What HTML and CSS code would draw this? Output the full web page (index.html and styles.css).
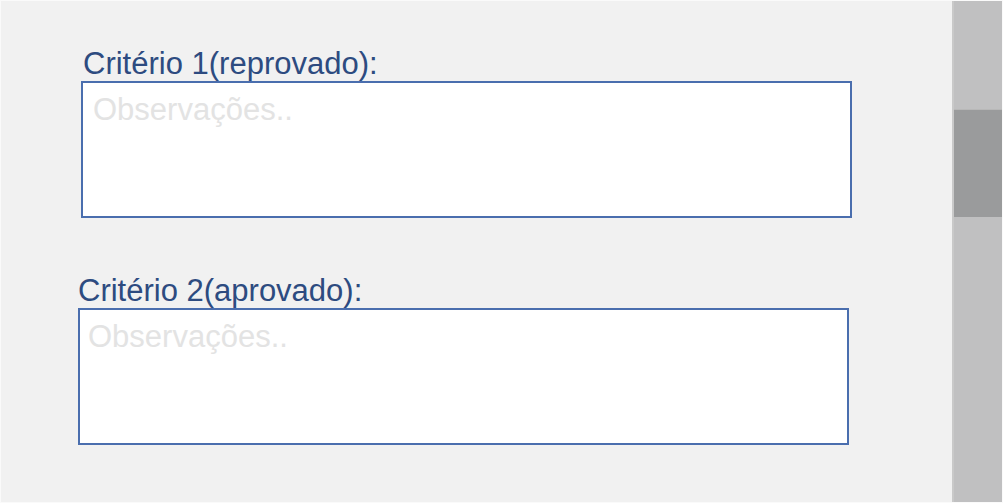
FILE: index.html
```html
<!DOCTYPE html>
<html lang="pt">
<head>
<meta charset="utf-8">
<link rel="stylesheet" href="styles.css">
</head>
<body>
<div class="frame">
  <div class="content">
    <div class="field field-1">
      <label class="label">Critério 1(reprovado):</label>
      <textarea class="obs" placeholder="Observações.."></textarea>
    </div>
    <div class="field field-2">
      <label class="label">Critério 2(aprovado):</label>
      <textarea class="obs" placeholder="Observações.."></textarea>
    </div>
  </div>
  <div class="scrollbar">
    <div class="track-top"></div>
    <div class="thumb"></div>
    <div class="track-bottom"></div>
  </div>
</div>
</body>
</html>
```
FILE: styles.css
```css
html, body {
  margin: 0;
  padding: 0;
  background: #ffffff;
}
.frame {
  box-sizing: border-box;
  width: 1003px;
  height: 503px;
  border: 1px solid #fafafa;
  background: #f1f1f1;
  display: flex;
  overflow: hidden;
}
.content {
  flex: 1;
  display: flex;
  flex-direction: column;
}
.field {
  display: flex;
  flex-direction: column;
  align-items: flex-start;
}
.field-1 {
  margin-top: 45px;
  margin-left: 80px;
}
.field-1 .label {
  padding-left: 2px;
}
.field-2 {
  margin-top: 55px;
  margin-left: 77px;
}
.field-2 .obs {
  padding-left: 8px;
}
.label {
  font-family: "Liberation Sans", Arial, sans-serif;
  font-size: 31px;
  line-height: 35px;
  color: #2d4b80;
}
.obs {
  box-sizing: border-box;
  width: 771px;
  height: 137px;
  margin: 0;
  border: 2px solid #4a6eae;
  background: #ffffff;
  resize: none;
  outline: none;
  padding: 9px 10px 4px;
  font-family: "Liberation Sans", Arial, sans-serif;
  font-size: 31px;
  line-height: 36px;
  color: #333;
}
.obs::placeholder {
  color: #e3e3e3;
  opacity: 1;
}
.scrollbar {
  width: 50px;
  box-sizing: border-box;
  flex: none;
  display: flex;
  flex-direction: column;
  border-left: 2px solid #c9c9c9;
  background: #c0c0c1;
}
.track-top {
  height: 108px;
  border-bottom: 1px solid #b8b8b8;
}
.thumb {
  height: 107px;
  background: #9a9b9c;
}
.track-bottom {
  flex: 1;
}
```
